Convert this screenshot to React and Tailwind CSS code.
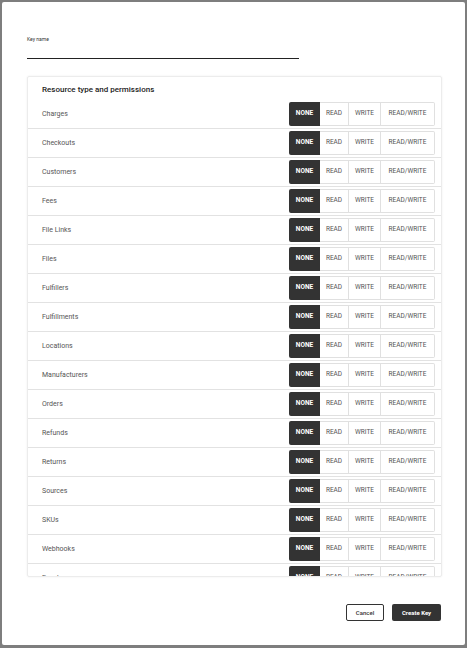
import React from "react";

const rows = [
  "Charges",
  "Checkouts",
  "Customers",
  "Fees",
  "File Links",
  "Files",
  "Fulfillers",
  "Fulfillments",
  "Locations",
  "Manufacturers",
  "Orders",
  "Refunds",
  "Returns",
  "Sources",
  "SKUs",
  "Webhooks",
  "Events",
  "Products",
  "Shipments",
];

function Row({ name }) {
  return (
    <div className="flex h-[29px] shrink-0 items-center justify-between border-b border-[#e2e2e2] pl-[14px] pr-[6px]">
      <span className="text-[7px] text-[#555]">{name}</span>
      <div className="flex h-[24px] items-stretch text-[6.5px]">
        <div className="flex w-[31px] items-center justify-center rounded-l-[2px] bg-[#333] font-bold text-white">
          NONE
        </div>
        <div className="flex w-[29px] items-center justify-center border-y border-r border-[#e0e0e0] text-[#555]">
          READ
        </div>
        <div className="flex w-[32px] items-center justify-center border-y border-r border-[#e0e0e0] text-[#555]">
          WRITE
        </div>
        <div className="flex w-[54px] items-center justify-center rounded-r-[2px] border-y border-r border-[#e0e0e0] text-[#555]">
          READ/WRITE
        </div>
      </div>
    </div>
  );
}

export default function App() {
  return (
    <div
      className="h-[648px] w-[467px] overflow-hidden bg-[#7e7e7e] pl-[2px] pt-[2px]"
      style={{ fontFamily: "Roboto, 'Liberation Sans', sans-serif" }}
    >
      <div className="flex h-[643px] w-[463px] flex-col rounded-[2px] bg-white pl-[25px] pr-[23px] pt-[34px]">
        <div className="text-[5px] leading-[6px] text-[#333]">Key name</div>
        <div className="mt-[16px] h-px w-[272px] bg-[#222]" />
        <div className="mt-[17px] flex h-[501px] w-[415px] flex-col overflow-hidden rounded-[2px] border border-[#ececec] shadow-[0_0_2px_rgba(0,0,0,0.08)]">
          <div className="flex h-[23px] shrink-0 items-center pl-[14px] pt-[2px] text-[8px] font-medium text-[#222]">
            Resource type and permissions
          </div>
          {rows.map((r) => (
            <Row key={r} name={r} />
          ))}
        </div>
        <div className="mt-[27px] flex justify-end gap-[8px] pr-[1px]">
          <button className="flex h-[17px] w-[38px] items-center justify-center rounded-[2px] border border-[#333] bg-white text-[6px] font-medium text-[#333]">
            Cancel
          </button>
          <button className="flex h-[17px] w-[49px] items-center justify-center rounded-[2px] bg-[#333] text-[6px] font-bold text-white">
            Create Key
          </button>
        </div>
      </div>
    </div>
  );
}
